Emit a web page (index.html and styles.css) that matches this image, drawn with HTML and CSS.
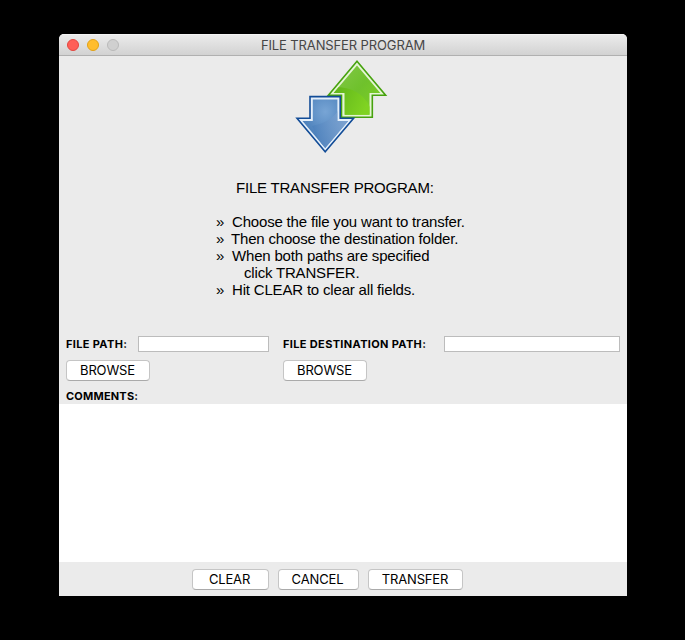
FILE: index.html
```html
<!DOCTYPE html>
<html lang="en">
<head>
<meta charset="utf-8">
<title>File Transfer Program</title>
<link rel="stylesheet" href="styles.css">
</head>
<body>
<main class="window">
  <header class="titlebar">
    <div class="lights"><span class="light close"></span><span class="light minimize"></span><span class="light disabled"></span></div>
    <h1 class="title">FILE TRANSFER PROGRAM</h1>
  </header>
  <section class="intro">
    <svg class="logo" width="94" height="96" viewBox="0 0 94 96" aria-hidden="true">
      <defs>
        <linearGradient id="green" x1="0" y1="0" x2="1" y2="1"><stop offset="0" stop-color="#84c94a"/><stop offset=".5" stop-color="#6fc12c"/><stop offset="1" stop-color="#7fd224"/></linearGradient>
        <linearGradient id="greenSheen" x1="0" y1="0" x2="1" y2=".4"><stop offset="0" stop-color="#5eb31a"/><stop offset="1" stop-color="#80d322"/></linearGradient>
        <radialGradient id="blue" cx=".5" cy=".25" r=".65"><stop offset="0" stop-color="#78a5d5"/><stop offset="1" stop-color="#4278b5"/></radialGradient>
        <linearGradient id="blueSheen" x1="0" y1="0" x2="1" y2="0"><stop offset="0" stop-color="#4b80bc"/><stop offset=".8" stop-color="#86a9d4"/></linearGradient>
        <clipPath id="upClip"><path d="M63 7.5 86.3 35H75.5V56.8H50.7V35H39.7Z"/></clipPath>
        <clipPath id="downClip"><path d="M18.8 41.6H43.4V63H54.2L31.2 90 8.5 63H18.8Z"/></clipPath>
      </defs>
      <path d="M63 3.2 91.6 37.3H78.3V59.3H47.5V37.3H34.4Z" fill="#e4f5d3" stroke="#46a20e" stroke-width="1.6"/>
      <path d="M63 7.5 86.3 35H75.5V56.8H50.7V35H39.7Z" fill="url(#green)"/>
      <path clip-path="url(#upClip)" d="M38 29Q66 28 76 49V60H38Z" fill="url(#greenSheen)"/>
      <path d="M16 38.6H46.2V60.3H59.6L31.2 93.8 3 60.3H16Z" fill="#e4effa" stroke="#124c97" stroke-width="1.6"/>
      <path d="M18.8 41.6H43.4V63H54.2L31.2 90 8.5 63H18.8Z" fill="url(#blue)"/>
      <path clip-path="url(#downClip)" d="M45 51Q38 64 18 68L31 93 58 61Z" fill="url(#blueSheen)" opacity=".75"/>
    </svg>
    <h2 class="heading">FILE TRANSFER PROGRAM:</h2>
    <ul class="steps">
      <li><span>Choose the file you want to transfer.</span></li>
      <li class="second"><span>Then choose the destination folder.</span></li>
      <li><span>When both paths are specified</span></li>
      <li class="continued"><span>click TRANSFER.</span></li>
      <li><span>Hit CLEAR to clear all fields.</span></li>
    </ul>
  </section>
  <section class="paths">
    <div class="path source">
      <div class="row"><label for="source">FILE PATH:</label><input id="source" type="text"></div>
      <button type="button">BROWSE</button>
    </div>
    <div class="path destination">
      <div class="row"><label for="destination">FILE DESTINATION PATH:</label><input id="destination" type="text"></div>
      <button type="button">BROWSE</button>
    </div>
  </section>
  <label class="comments-label" for="comments">COMMENTS:</label>
  <textarea class="comments" id="comments"></textarea>
  <footer class="actions">
    <button class="clear" type="button">CLEAR</button>
    <button class="cancel" type="button">CANCEL</button>
    <button class="transfer" type="button">TRANSFER</button>
  </footer>
</main>
</body>
</html>
```
FILE: styles.css
```css
* { box-sizing: border-box; }
body {
  margin: 0;
  height: 640px;
  padding: 34px 58px 44px 59px;
  background: #000;
  color: #000;
  font-family: Inter, sans-serif;
  overflow: hidden;
}
.window {
  display: flex;
  flex-direction: column;
  width: 568px;
  height: 562px;
  background: #ebebeb;
  border-radius: 5px 5px 0 0;
  overflow: hidden;
}
.titlebar {
  display: grid;
  grid-template-columns: 70px 1fr 70px;
  align-items: center;
  height: 22px;
  flex: none;
  background: linear-gradient(#ebebeb, #d2d2d2);
  border-top: 1px solid #f4f4f4;
  border-bottom: 1px solid #b0b0b0;
}
.lights { display: flex; gap: 8px; padding-left: 8px; }
.light { width: 12px; height: 12px; border: 1px solid; border-radius: 50%; }
.close { background: #ff5f57; border-color: #e2463f; }
.minimize { background: #ffbd2e; border-color: #e1a116; }
.disabled { background: #d0d0d0; border-color: #b9b9b9; }
.title {
  margin: 0;
  font-size: 13px;
  font-weight: 400;
  line-height: 20px;
  text-align: center;
  letter-spacing: -.12px;
  color: #464646;
  white-space: nowrap;
}
.intro { height: 276px; flex: none; font: 15px/17px "Liberation Sans", sans-serif; }
.logo { display: block; margin: 2px 0 0 235px; }
.heading {
  margin: 25px 0 17px 177px;
  font: inherit;
  letter-spacing: -.21px;
  white-space: nowrap;
}
.steps { margin: 0; padding: 0 0 0 157px; list-style: none; white-space: nowrap; }
.steps li { display: flex; height: 17px; letter-spacing: -.18px; }
.steps li::before { content: "»"; width: 16px; flex: none; }
.steps .second::before { width: 15px; }
.steps .continued::before { content: ""; width: 28px; }
.paths { display: flex; flex: none; height: 56px; padding: 4px 7px 0; }
.source { width: 203px; margin-right: 14px; }
.destination { width: 337px; }
.row { display: flex; justify-content: space-between; align-items: center; height: 16px; margin-bottom: 8px; }
label { font-size: 11px; font-weight: 700; line-height: 16px; letter-spacing: .35px; white-space: nowrap; }
input { width: 131px; height: 16px; padding: 0 3px; border: 1px solid #bcbcbc; background: #fff; }
.destination input { width: 176px; }
button {
  width: 84px;
  height: 21px;
  padding: 0 1px 1px 0;
  border: 1px solid #c5c5c5;
  border-bottom-color: #aaa;
  border-radius: 4px;
  background: #fff;
  color: #000;
  font: 13px/18px Inter, sans-serif;
  letter-spacing: -.15px;
}
.path button { display: block; }
.comments-label { height: 16px; flex: none; padding-left: 7px; letter-spacing: .2px; }
.comments { display: block; width: 100%; height: 158px; flex: none; margin: 0; padding: 4px; border: 0; resize: none; background: #fff; }
.actions { display: flex; gap: 9px; height: 34px; padding: 7px 0 0 133px; }
.clear { width: 77px; padding-right: 2px; }
.cancel { width: 81px; padding-right: 2px; }
.transfer { width: 95px; }
```
